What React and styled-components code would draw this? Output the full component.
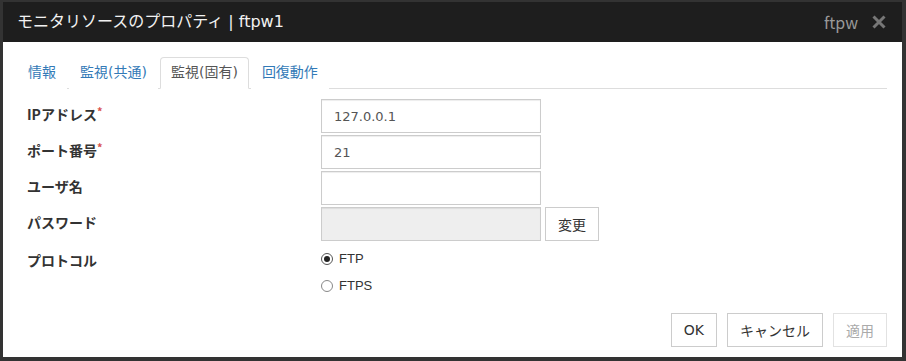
import styled, { createGlobalStyle } from 'styled-components';

const GlobalStyle = createGlobalStyle`
  html, body {
    margin: 0;
    padding: 0;
  }
  body {
    background: #333;
    font-family: "Noto Sans CJK JP", sans-serif;
  }
`;

const Screen = styled.div`
  height: 361px;
  box-sizing: border-box;
  padding: 2px 4px 4px 3px;
  background: #333;
`;

const Dialog = styled.div`
  height: 100%;
  display: flex;
  flex-direction: column;
  background: #fff;
`;

const Header = styled.div`
  height: 40px;
  flex-shrink: 0;
  display: flex;
  align-items: center;
  justify-content: space-between;
  padding: 0 16px 0 14px;
  background: #1e1e1e;
`;

const Title = styled.div`
  color: #f2f2f2;
  font-family: "DejaVu Sans", "Noto Sans CJK JP", sans-serif;
  font-size: 16px;
  line-height: 20px;
`;

const HeaderRight = styled.div`
  display: flex;
  align-items: center;
  gap: 14px;
  color: #999;
  font-size: 16px;
  line-height: 20px;
`;

const Body = styled.div`
  flex: 1;
  display: flex;
  flex-direction: column;
  padding: 15px 15px 0 14px;
`;

const TabBar = styled.div`
  display: flex;
  border-bottom: 1px solid #ddd;
`;

const Tab = styled.div`
  box-sizing: border-box;
  height: 32px;
  margin: 0 2px -1px 0;
  padding: 0 10px;
  border: 1px solid ${({ $active }) => ($active ? '#ddd' : 'transparent')};
  border-bottom-color: ${({ $active }) => ($active ? '#fff' : 'transparent')};
  border-radius: 4px 4px 0 0;
  background: #fff;
  color: ${({ $active }) => ($active ? '#555' : '#337ab7')};
  font-family: "DejaVu Sans", "Noto Sans CJK JP", sans-serif;
  font-size: 14px;
  line-height: 29px;
  cursor: pointer;
`;

const Form = styled.div`
  display: grid;
  grid-template-columns: 294px 1fr;
  row-gap: 2px;
  margin-top: 10px;
  padding-left: 10px;
`;

const Label = styled.div`
  padding-top: ${({ $top }) => $top || 5}px;
  color: #333;
  font-size: 14px;
  font-weight: 700;
  line-height: 20px;
`;

const Required = styled.span`
  color: #d9534f;
  font-size: 11px;
  vertical-align: top;
  line-height: 14px;
`;

const Field = styled.div`
  display: flex;
  align-items: center;
  gap: 4px;
`;

const Input = styled.input`
  box-sizing: border-box;
  width: 220px;
  height: 34px;
  margin: 0;
  padding: 0 12px;
  border: 1px solid #ccc;
  border-radius: 0;
  background: ${({ disabled }) => (disabled ? '#eee' : '#fff')};
  box-shadow: inset 0 1px 1px rgba(0, 0, 0, 0.075);
  color: #555;
  font-family: "DejaVu Sans", sans-serif;
  font-size: 13px;
  outline: none;
`;

const Button = styled.button`
  box-sizing: border-box;
  height: 34px;
  padding: 0 12px;
  border: 1px solid ${({ disabled }) => (disabled ? '#e2e2e2' : '#ccc')};
  border-radius: 0;
  background: #fff;
  color: ${({ disabled }) => (disabled ? '#aaa' : '#333')};
  font-family: "DejaVu Sans", "Noto Sans CJK JP", sans-serif;
  font-size: 14px;
  cursor: pointer;
`;

const RadioGroup = styled.div`
  padding-top: 2px;
`;

const RadioRow = styled.label`
  display: flex;
  align-items: center;
  gap: 6px;
  height: 27px;
  color: #333;
  font-family: "Liberation Sans", sans-serif;
  font-size: 13px;
`;

const RadioMark = styled.span`
  box-sizing: border-box;
  width: 12px;
  height: 12px;
  border-radius: 50%;
  border: 1px solid ${({ $checked }) => ($checked ? '#555' : '#888')};
  display: grid;
  place-items: center;

  &::after {
    content: '';
    width: 6px;
    height: 6px;
    border-radius: 50%;
    background: ${({ $checked }) => ($checked ? '#222' : 'transparent')};
  }
`;

const Footer = styled.div`
  margin-top: auto;
  display: flex;
  justify-content: flex-end;
  gap: 10px;
  padding-bottom: 10px;
`;

const CloseIcon = () => (
  <svg width="14" height="14" viewBox="0 0 14 14">
    <path d="M1.5 1.5 L12.5 12.5 M12.5 1.5 L1.5 12.5" stroke="#777" strokeWidth="3" />
  </svg>
);

const tabs = ['情報', '監視(共通)', '監視(固有)', '回復動作'];

export default function App() {
  return (
    <>
      <GlobalStyle />
      <Screen>
        <Dialog>
          <Header>
            <Title>モニタリソースのプロパティ | ftpw1</Title>
            <HeaderRight>
              <span>ftpw</span>
              <CloseIcon />
            </HeaderRight>
          </Header>
          <Body>
            <TabBar>
              {tabs.map((t, i) => (
                <Tab key={t} $active={i === 2}>{t}</Tab>
              ))}
            </TabBar>
            <Form>
              <Label>IPアドレス<Required>*</Required></Label>
              <Field><Input defaultValue="127.0.0.1" /></Field>

              <Label>ポート番号<Required>*</Required></Label>
              <Field><Input defaultValue="21" /></Field>

              <Label>ユーザ名</Label>
              <Field><Input defaultValue="" /></Field>

              <Label>パスワード</Label>
              <Field>
                <Input type="password" disabled />
                <Button>変更</Button>
              </Field>

              <Label $top={7}>プロトコル</Label>
              <RadioGroup>
                <RadioRow><RadioMark $checked />FTP</RadioRow>
                <RadioRow><RadioMark />FTPS</RadioRow>
              </RadioGroup>
            </Form>
            <Footer>
              <Button>OK</Button>
              <Button>キャンセル</Button>
              <Button disabled>適用</Button>
            </Footer>
          </Body>
        </Dialog>
      </Screen>
    </>
  );
}
